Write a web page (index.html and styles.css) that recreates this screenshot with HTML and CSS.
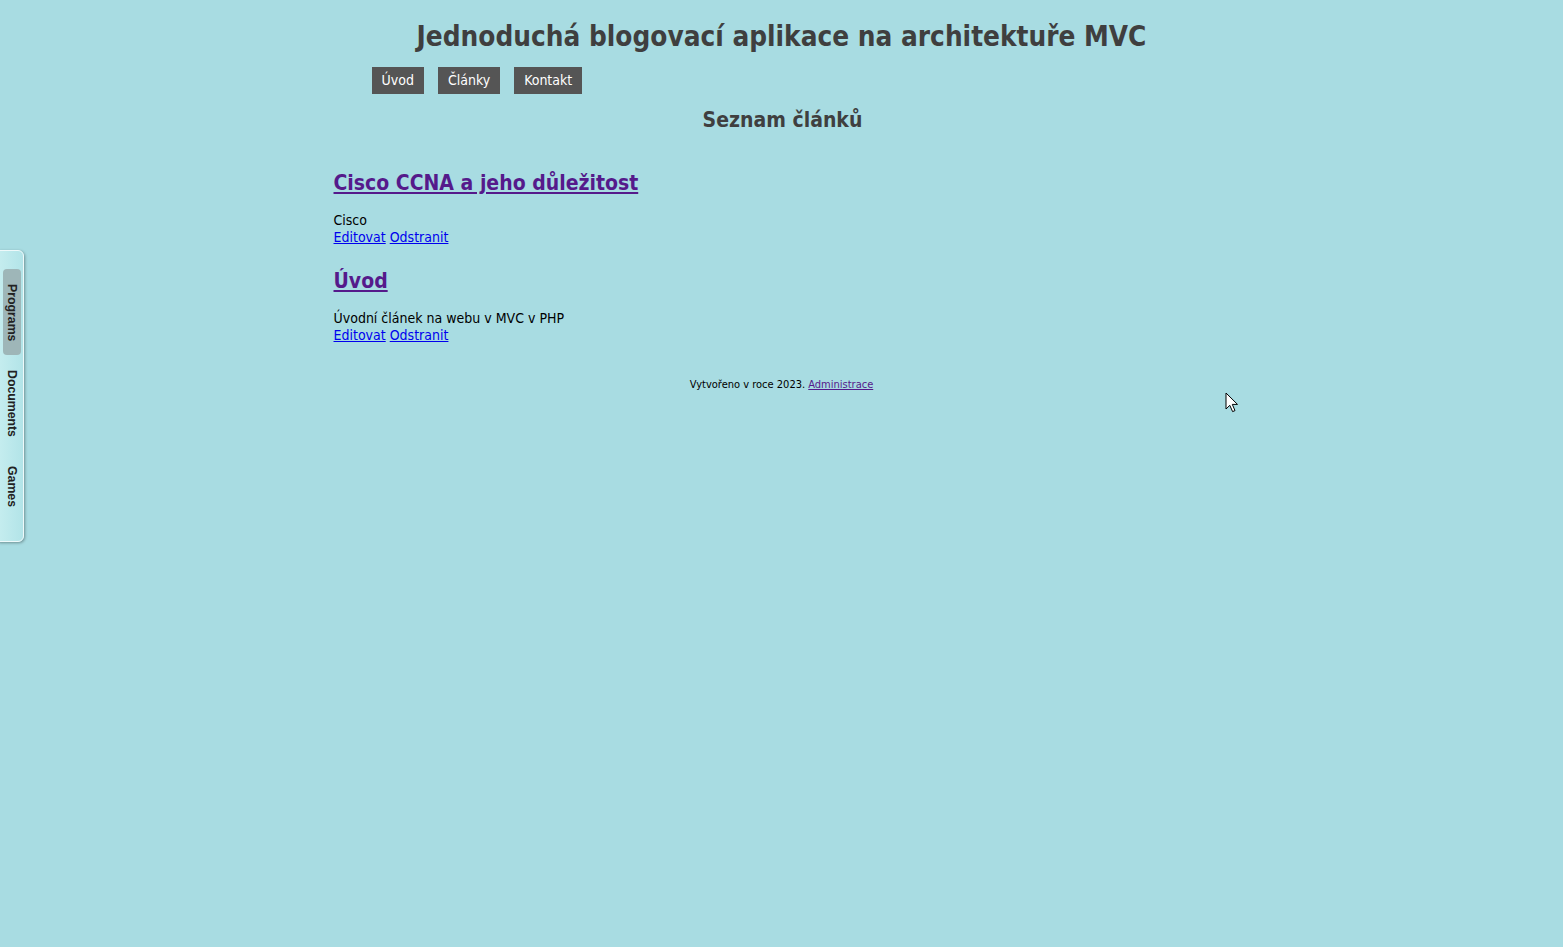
FILE: index.html
```html
<!DOCTYPE html>
<html lang="cs">
<head>
<meta charset="utf-8">
<title>Blog MVC</title>
<link rel="stylesheet" href="styles.css">
</head>
<body>
<div class="page">
  <header class="site-header">
    <h1 class="site-title">Jednoduchá blogovací aplikace na architektuře MVC</h1>
    <nav class="menu">
      <a class="menu-item" href="#">Úvod</a>
      <a class="menu-item" href="#">Články</a>
      <a class="menu-item" href="#">Kontakt</a>
    </nav>
  </header>
  <main class="content">
    <h2 class="page-title">Seznam článků</h2>
    <article class="article">
      <h3 class="article-title"><a href="#">Cisco CCNA a jeho důležitost</a></h3>
      <p class="article-desc">Cisco</p>
      <div class="article-actions"><a class="action" href="#">Editovat</a> <a class="action" href="#">Odstranit</a></div>
    </article>
    <article class="article">
      <h3 class="article-title"><a href="#">Úvod</a></h3>
      <p class="article-desc">Úvodní článek na webu v MVC v PHP</p>
      <div class="article-actions"><a class="action" href="#">Editovat</a> <a class="action" href="#">Odstranit</a></div>
    </article>
  </main>
  <footer class="site-footer">Vytvořeno v roce 2023. <a href="#">Administrace</a></footer>
</div>

<div class="dock">
  <div class="dock-tab active">Programs</div>
  <div class="dock-tab">Documents</div>
  <div class="dock-tab">Games</div>
</div>

<svg class="cursor" width="14" height="22" viewBox="0 0 14 22">
  <path d="M1 1 L1 17 L4.8 13.3 L7.6 19.6 L10 18.6 L7.3 12.4 L12.5 12.4 Z" fill="#fff" stroke="#000" stroke-width="1" stroke-linejoin="miter"/>
</svg>
</body>
</html>
```

FILE: styles.css
```css
html, body {
  margin: 0;
  padding: 0;
}
body {
  background: #a8dce2;
  font-family: "DejaVu Sans Condensed", "DejaVu Sans", sans-serif;
  font-size: 14px;
  color: #000;
  min-height: 947px;
}
.page {
  width: 900px;
  margin: 0 auto;
  padding-top: 1px;
}
.site-title {
  margin: 19px 0 0;
  text-align: center;
  font-size: 27.7px;
  line-height: 34px;
  font-weight: bold;
  color: #3f3f3f;
}
.menu {
  display: flex;
  gap: 14px;
  margin: 13px 0 0 40px;
}
.menu-item {
  display: block;
  background: #555555;
  color: #fff;
  text-decoration: none;
  padding: 0 10px;
  height: 27px;
  line-height: 27px;
  font-size: 14px;
}
.page-title {
  margin: 12px 0 0;
  text-align: center;
  font-size: 21px;
  line-height: 28px;
  color: #3f3f3f;
}
.content {
  padding-left: 2px;
}
.article-title {
  margin: 34px 0 0;
  font-size: 21px;
  line-height: 30px;
}
.article + .article .article-title {
  margin-top: 20px;
}
.article-title a {
  color: #551a8b;
}
.article-desc {
  margin: 14px 0 0;
  line-height: 17px;
}
.article-actions {
  line-height: 17px;
}
.action {
  color: #0000ee;
}
.site-footer {
  margin-top: 34px;
  text-align: center;
  font-size: 11px;
  line-height: 14px;
}
.site-footer a {
  color: #551a8b;
}
.dock {
  position: absolute;
  left: -6px;
  top: 250px;
  width: 30px;
  height: 292px;
  box-sizing: border-box;
  border-radius: 6px;
  background: linear-gradient(to right, #c8eef0, #b2e4e8);
  border: 1px solid #eef9fa;
  box-shadow: 1px 1px 3px rgba(0,0,0,0.35);
  display: flex;
  flex-direction: column;
  align-items: flex-end;
  padding: 18px 2px 0 0;
  gap: 0;
}
.dock-tab {
  writing-mode: vertical-rl;
  font-family: "Liberation Sans", Arial, sans-serif;
  font-size: 12.3px;
  font-weight: bold;
  color: #222;
  width: 18px;
  box-sizing: border-box;
  padding: 15px 0 14px;
  text-align: center;
  line-height: 18px;
  border-radius: 4px;
}
.dock-tab.active {
  background: #9eb6b8;
}
.cursor {
  position: absolute;
  left: 1225px;
  top: 392px;
}
```
